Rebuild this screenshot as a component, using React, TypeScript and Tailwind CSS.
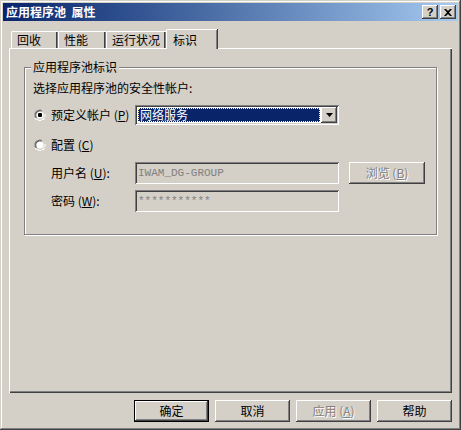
import React from 'react';

const cjk = '[font-family:"Noto_Sans_CJK_SC","Noto_Sans",sans-serif]';

const raised =
  'shadow-[inset_-1px_-1px_0_#404040,inset_1px_1px_0_#ffffff,inset_-2px_-2px_0_#808080,inset_2px_2px_0_#d4d0c8]';
const sunken =
  'shadow-[inset_1px_1px_0_#808080,inset_-1px_-1px_0_#ffffff,inset_2px_2px_0_#404040,inset_-2px_-2px_0_#d4d0c8]';

function Radio({ checked }: { checked?: boolean }) {
  return (
    <svg width="12" height="12" viewBox="0 0 12 12" className="shrink-0">
      <path d="M1 8V4l1-1V2h2l1-1h2" stroke="#808080" fill="none" />
      <path d="M2 9V4h1V3h1V2h4" stroke="#404040" fill="none" />
      <path d="M3 9.5h1l1 1h2l1-1h1l1-1V4" stroke="#d4d0c8" fill="none" />
      <path d="M1.5 9v1h1l1 1h1.5M5 11.5h2l1-1h2v-2l1-1V5" stroke="#ffffff" fill="none" />
      <circle cx="6" cy="6" r="3.6" fill="#ffffff" />
      {checked && <rect x="4" y="4" width="4" height="4" rx="1" fill="#000" />}
    </svg>
  );
}

function Btn({ label, def, disabled, w = 'w-[75px]' }: { label: React.ReactNode; def?: boolean; disabled?: boolean; w?: string }) {
  return (
    <div
      className={`${w} h-[22px] flex items-center justify-center text-[12px] ${cjk} ${
        def ? 'border border-black' : ''
      }`}
    >
      <div
        className={`w-full h-full flex items-center justify-center ${raised} ${
          disabled ? 'text-[#808080] [text-shadow:1px_1px_0_#ffffff]' : 'text-black'
        }`}
      >
        {label}
      </div>
    </div>
  );
}

function Tab({ label, w, active }: { label: string; w: string; active?: boolean }) {
  if (active) {
    return (
      <div
        className={`${w} h-[20px] -mb-[1px] relative z-10 bg-[#d4d0c8] rounded-tl-[2px] border-t border-l border-white shadow-[inset_-1px_0_0_#808080,1px_0_0_#404040] flex items-start pt-[1px] pl-[6px] text-[12px] ${cjk}`}
      >
        {label}
      </div>
    );
  }
  return (
    <div
      className={`${w} h-[17px] rounded-tl-[2px] border-t border-l border-white shadow-[inset_-1px_0_0_#808080,inset_-2px_0_0_#404040] flex items-center pl-[5px] text-[12px] ${cjk}`}
    >
      {label}
    </div>
  );
}

export default function App() {
  return (
    <div
      className={`w-[461px] h-[430px] bg-[#d4d0c8] p-[3px] flex flex-col text-black shadow-[inset_-1px_-1px_0_#404040,inset_1px_1px_0_#d4d0c8,inset_-2px_-2px_0_#808080,inset_2px_2px_0_#ffffff] ${cjk}`}
    >
      {/* title bar */}
      <div className="h-[18px] bg-gradient-to-r from-[#0a246a] to-[#a6caf0] flex items-center pl-[3px] pr-[2px]">
        <span className="text-white font-bold text-[12px] leading-none">应用程序池&nbsp;&nbsp;属性</span>
        <div className="ml-auto flex gap-[2px]">
          <div className={`w-[16px] h-[14px] bg-[#d4d0c8] ${raised} flex items-center justify-center`}>
            <span className="font-bold text-[11px] leading-none [font-family:'Liberation_Sans',sans-serif]">?</span>
          </div>
          <div className={`w-[16px] h-[14px] bg-[#d4d0c8] ${raised} flex items-center justify-center`}>
            <svg width="8" height="7" viewBox="0 0 8 7">
              <path d="M0 0h2l2 2 2-2h2L5 3.5 8 7H6L4 5 2 7H0l3-3.5z" fill="#000" />
            </svg>
          </div>
        </div>
      </div>

      {/* body */}
      <div className="flex-1 flex flex-col px-[6px] pt-[7px] pb-[5px]">
        <div className="h-[20px] flex items-end pl-[2px]">
          <Tab label="回收" w="w-[47px]" />
          <Tab label="性能" w="w-[48px]" />
          <Tab label="运行状况" w="w-[60px]" />
          <Tab label="标识" w="w-[51px]" active />
        </div>

        <div className="flex-1 shadow-[inset_1px_1px_0_#ffffff,inset_-1px_-1px_0_#404040,inset_-2px_-2px_0_#808080] px-[15px] pt-[19px]">
          {/* group box */}
          <div className="relative border border-[#808080] shadow-[1px_1px_0_#ffffff,inset_1px_1px_0_#ffffff] pl-[8px] pt-[13px] pb-[22px] text-[12px] leading-[14px]">
            <div className="absolute -top-[8px] left-[6px] px-[2px] bg-[#d4d0c8] leading-[14px]">应用程序池标识</div>

            <div>选择应用程序池的安全性帐户:</div>

            <div className="mt-[10px] h-[20px] flex items-center">
              <div className="w-[18px] pl-[1px]">
                <Radio checked />
              </div>
              <div className="w-[84px]">
                预定义帐户 (<u>P</u>)
              </div>
              <div className={`w-[204px] h-[20px] bg-white ${sunken} p-[2px] flex`}>
                <div className="flex-1 m-[1px] bg-[#0a246a] border border-dotted border-[#fff8b0] text-white flex items-center pl-[1px]">
                  网络服务
                </div>
                <div className={`w-[16px] bg-[#d4d0c8] ${raised} flex items-center justify-center`}>
                  <svg width="7" height="4" viewBox="0 0 7 4">
                    <path d="M0 0h7L3.5 4z" fill="#000" />
                  </svg>
                </div>
              </div>
            </div>

            <div className="mt-[10px] h-[20px] flex items-center">
              <div className="w-[18px] pl-[1px]">
                <Radio />
              </div>
              <div>
                配置 (<u>C</u>)
              </div>
            </div>

            <div className="mt-[7px] h-[22px] flex items-center pl-[18px]">
              <div className="w-[84px]">
                用户名 (<u>U</u>):
              </div>
              <div
                className={`w-[204px] h-[22px] ${sunken} flex items-center pl-[3px] text-[#808080] text-[11px] [font-family:'Liberation_Mono',monospace]`}
              >
                IWAM_DG-GROUP
              </div>
              <div className="ml-[10px]">
                <Btn
                  disabled
                  w="w-[76px]"
                  label={
                    <span>
                      浏览 (<u>B</u>)
                    </span>
                  }
                />
              </div>
            </div>

            <div className="mt-[6px] h-[22px] flex items-center pl-[18px]">
              <div className="w-[84px]">
                密码 (<u>W</u>):
              </div>
              <div
                className={`w-[204px] h-[22px] ${sunken} flex items-center pl-[3px] text-[#808080] text-[11px] [font-family:'Liberation_Mono',monospace]`}
              >
                ***********
              </div>
            </div>
          </div>
        </div>

        <div className="mt-[7px] h-[22px] flex justify-end gap-[6px]">
          <Btn label="确定" def />
          <Btn label="取消" />
          <Btn
            disabled
            label={
              <span>
                应用 (<u>A</u>)
              </span>
            }
          />
          <Btn label="帮助" />
        </div>
      </div>
    </div>
  );
}
